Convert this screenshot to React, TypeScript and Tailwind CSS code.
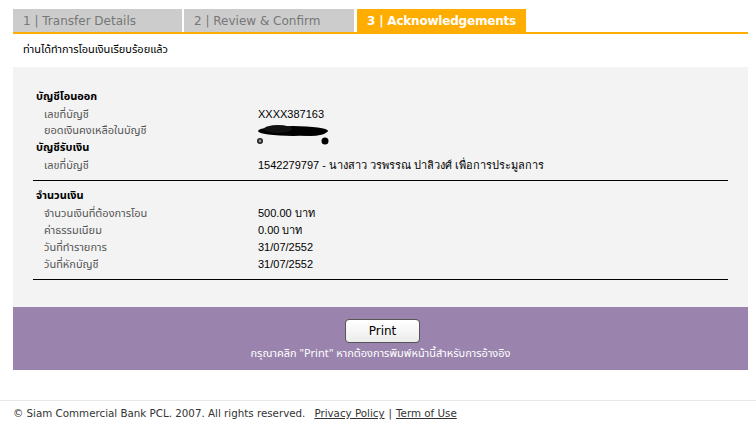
const sections = [
  {
    title: "บัญชีโอนออก",
    rows: [
      { label: "เลขที่บัญชี", value: "XXXX387163" },
      { label: "ยอดเงินคงเหลือในบัญชี", value: null },
    ],
  },
  {
    title: "บัญชีรับเงิน",
    rows: [
      {
        label: "เลขที่บัญชี",
        value: "1542279797 - นางสาว วรพรรณ ปาลิวงศ์ เพื่อการประมูลการ",
      },
    ],
  },
];

const amounts = [
  { label: "จำนวนเงินที่ต้องการโอน", value: "500.00 บาท" },
  { label: "ค่าธรรมเนียม", value: "0.00 บาท" },
  { label: "วันที่ทำรายการ", value: "31/07/2552" },
  { label: "วันที่หักบัญชี", value: "31/07/2552" },
];

const tabs = [
  { label: "1 | Transfer Details", active: false, w: "w-[169px]" },
  { label: "2 | Review & Confirm", active: false, w: "w-[170px]" },
  { label: "3 | Acknowledgements", active: true, w: "w-[169px]" },
];

const thai = "font-['Tahoma','Noto_Sans_Thai','DejaVu_Sans',sans-serif]";
const num = "font-['Liberation_Sans',Arial,sans-serif]";

function Scribble() {
  return (
    <svg width="80" height="17" viewBox="0 0 80 17" className="overflow-visible">
      <ellipse cx="35" cy="8" rx="35" ry="5" fill="#000" />
      <ellipse cx="20" cy="6" rx="14" ry="4" fill="#111" />
      <ellipse cx="52" cy="9" rx="16" ry="4" fill="#000" />
      <circle cx="2" cy="18" r="3" fill="#222" />
      <circle cx="2" cy="18" r="1.4" fill="#999" />
      <circle cx="67" cy="18" r="3.5" fill="#000" />
    </svg>
  );
}

function Row({ label, value }: { label: string; value: string | null }) {
  return (
    <div className="grid grid-cols-[225px_1fr] h-[17px] items-center">
      <span className={`${thai} pl-[11px] text-[11px] text-[#555]`}>{label}</span>
      <span className="text-[11px] text-black">
        {value === null ? <Scribble /> : <span className={num}>{value}</span>}
      </span>
    </div>
  );
}

export default function App() {
  return (
    <div className="w-[756px] h-[437px] bg-white overflow-hidden font-['DejaVu_Sans',Verdana,sans-serif]">
      <div className="ml-[13px] w-[735px] pt-[9px]">
        <div className="flex border-b-2 border-[#ffad00]">
          {tabs.map((t, i) => (
            <div
              key={t.label}
              className={`${t.w} ${i === 1 ? "ml-[2px]" : ""} ${i === 2 ? "ml-[3px]" : ""} h-[23px] flex items-center pl-[10px] text-[12px] ${
                t.active ? "bg-[#ffad00] text-white font-bold tracking-[-0.2px]" : "bg-[#cccccc] text-[#777]"
              }`}
            >
              {t.label}
            </div>
          ))}
        </div>

        <p className={`${thai} h-[33px] flex items-center pl-[10px] text-[11px] text-black`}>
          ท่านได้ทำการโอนเงินเรียบร้อยแล้ว
        </p>

        <div className="bg-[#f3f3f3] pt-[22px] pb-[27px] px-[20px]">
          <div className="border-b border-black pb-[6px]">
            {sections.map((s) => (
              <div key={s.title}>
                <div className={`${thai} h-[17px] flex items-center pl-[3px] text-[11px] font-bold text-black`}>
                  {s.title}
                </div>
                {s.rows.map((r, i) => (
                  <Row key={i} label={r.label} value={r.value} />
                ))}
              </div>
            ))}
          </div>
          <div className="border-b border-black pt-[7px] pb-[6px]">
            <div className={`${thai} h-[17px] flex items-center pl-[3px] text-[11px] font-bold text-black`}>
              จำนวนเงิน
            </div>
            {amounts.map((r) => (
              <Row key={r.label} label={r.label} value={r.value} />
            ))}
          </div>
        </div>

        <div className="bg-[#9a84ae] h-[63px] flex flex-col items-center pt-[12px]">
          <button className="ml-[4px] w-[75px] h-[24px] rounded-[4px] border border-[#555] bg-gradient-to-b from-white to-[#ececec] text-[12px] text-black">
            Print
          </button>
          <p className={`${thai} mt-[3px] text-[11px] text-white`}>
            กรุณาคลิก "Print" หากต้องการพิมพ์หน้านี้สำหรับการอ้างอิง
          </p>
        </div>
      </div>

      <div className="mt-[30px] border-t border-[#e8e8e8] pt-[5px] pl-[13px] text-[10.3px] text-[#333] flex items-center gap-[4px]">
        <span>© Siam Commercial Bank PCL. 2007. All rights reserved.</span>
        <a href="#" className="ml-[5px] underline">Privacy Policy</a>
        <span>|</span>
        <a href="#" className="underline">Term of Use</a>
      </div>
    </div>
  );
}
